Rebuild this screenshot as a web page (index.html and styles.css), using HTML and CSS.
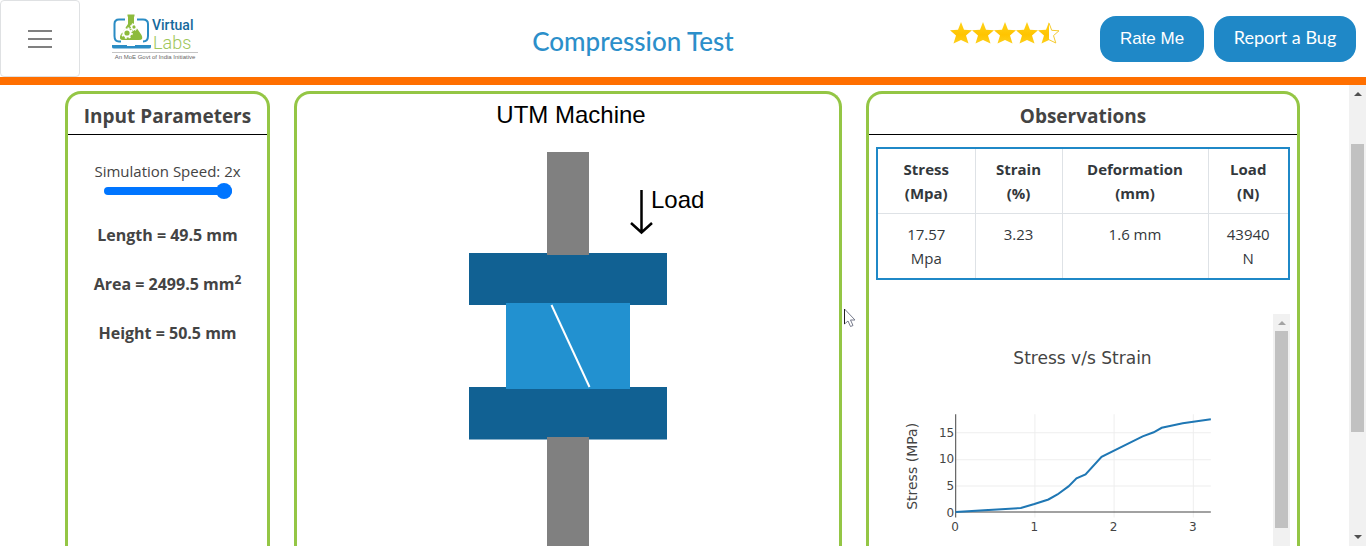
FILE: index.html
```html
<!DOCTYPE html>
<html lang="en">
<head>
<meta charset="utf-8">
<title>Compression Test - Virtual Labs</title>
<link rel="stylesheet" href="styles.css">
</head>
<body>
<header class="header">
  <div class="brand">
    <button class="menu" type="button" aria-label="Menu">
      <span class="menu-bar"></span><span class="menu-bar"></span><span class="menu-bar"></span>
    </button>
    <a href="#" class="logo" aria-label="Virtual Labs">
      <svg width="88" height="50" viewBox="0 0 88 50">
        <path d="M13 5.500H7Q2.500 5.500 2.500 10V22Q2.500 27.500 7 27.500H9M25 5.500H31Q36 5.500 36 10V22Q36 27.500 31 27.500" fill="none" stroke="#2a8cc4" stroke-width="2"/>
        <path d="M0 31H39V33Q39 34.500 37 34.500H2Q0 34.500 0 33Z" fill="#2a8cc4"/>
        <path d="M15 31h8v1h-8z" fill="#fff"/>
        <path d="M15.500 .5H22.500V2.500H22V10L29.500 21Q32 26 27 26H11Q6.500 26 8.500 21L16 10V2.500H15.500Z" fill="#8dbb3d"/>
        <circle cx="15" cy="19" r="3.600" fill="none" stroke="#fff" stroke-width="2"/>
        <circle cx="15" cy="19" r="5" fill="none" stroke="#fff" stroke-width="1.600" stroke-dasharray="2 1.930"/>
        <circle cx="22" cy="13" r="2.400" fill="none" stroke="#fff" stroke-width="1.500"/>
        <circle cx="22" cy="13" r="3.600" fill="none" stroke="#fff" stroke-width="1" stroke-dasharray="1.500 1.330"/>
        <text x="40" y="16" class="logo-virtual">Virtual</text>
        <text x="41" y="35" class="logo-labs">Labs</text>
        <path d="M0 38.500H86" stroke="#c4c4c4"/>
        <text x="43" y="45" text-anchor="middle" class="logo-tag">An MoE Govt of India Initiative</text>
      </svg>
    </a>
  </div>
  <h1 class="title">Compression Test</h1>
  <div class="actions">
    <svg class="stars" width="110" height="23" viewBox="0 0 110 23" role="img" aria-label="4.5 out of 5 stars">
      <defs>
        <path id="star" d="M11 0L14 7.800L22 8.300L16 13.500L18.500 21.500L11 18L3.500 21.500L6 13.500L0 8.300L8 7.800Z"/>
        <linearGradient id="gold" x1="0" y1="0" x2="0" y2="1">
          <stop offset="0" stop-color="#ffd21a"/><stop offset=".6" stop-color="#ffc400"/><stop offset="1" stop-color="#fdd01c"/>
        </linearGradient>
      </defs>
      <g fill="url(#gold)">
        <use href="#star"/><use href="#star" x="22"/><use href="#star" x="44"/><use href="#star" x="66"/>
        <path d="M99 0V18L91.500 21.500L94 13.500L88 8.300L96 7.800Z"/>
      </g>
      <path d="M99 1L101.700 8.300L109 8.800L103.500 13.600L105.800 21L99 17.700" fill="#fff" stroke="#f5cb2e"/>
    </svg>
    <button class="btn btn-rate" type="button">Rate Me</button>
    <button class="btn btn-bug" type="button">Report a Bug</button>
  </div>
</header>

<div class="page">
  <main class="panels">
    <section class="panel">
      <h2 class="panel-title">Input Parameters</h2>
      <div class="inputs">
        <label for="speed">Simulation Speed: 2x</label>
        <input id="speed" class="slider" type="range" min="1" max="2" value="2">
        <p class="param">Length = 49.5 mm</p>
        <p class="param">Area = 2499.5 mm<sup>2</sup></p>
        <p class="param">Height = 50.5 mm</p>
      </div>
    </section>

    <section class="panel">
      <svg class="machine" viewBox="0 0 542 452">
        <text x="274" y="29" text-anchor="middle">UTM Machine</text>
        <text x="354" y="114">Load</text>
        <path d="M344.500 96V138M334 129L344.500 138.500L355 129" fill="none" stroke="#000" stroke-width="2.500"/>
        <path d="M172 159H370V211H172ZM172 293H370V345.500H172Z" fill="#116193"/>
        <path d="M209 209H333V295H209Z" fill="#2291d0"/>
        <path d="M254.500 211L292.500 293" stroke="#fff" stroke-width="2"/>
        <path d="M250 58H292V161H250ZM250 343H292V452H250Z" fill="#808080"/>
      </svg>
    </section>

    <section class="panel">
      <h2 class="panel-title">Observations</h2>
      <div class="observations">
        <table class="results">
          <colgroup><col class="col-stress"><col class="col-strain"><col class="col-deform"><col class="col-load"></colgroup>
          <thead>
            <tr><th>Stress<br>(Mpa)</th><th>Strain<br>(%)</th><th>Deformation<br>(mm)</th><th>Load<br>(N)</th></tr>
          </thead>
          <tbody>
            <tr><td>17.57<br>Mpa</td><td>3.23</td><td>1.6 mm</td><td>43940<br>N</td></tr>
          </tbody>
        </table>
        <div class="plots">
          <svg class="chart" viewBox="0 0 396 232">
            <text x="206" y="50" text-anchor="middle" class="chart-title">Stress v/s Strain</text>
            <text transform="translate(41 152) rotate(-90)" text-anchor="middle" class="axis-title">Stress (MPa)</text>
            <path d="M158.500 100V203M237.500 100V203M316.500 100V203M80 118.500H334M80 145.500H334M80 171.500H334" stroke="#eee"/>
            <path d="M79.500 100V203M79 197.500H334" stroke="#444"/>
            <path d="M79.500 197.500L144.500 193.500L158 189.500L172 185L181 180L192 172L200 164L209 160L225 142.500L266 122L277 118L285 113.500L306 109L334 105" fill="none" stroke="#1f77b4" stroke-width="2"/>
            <g text-anchor="end"><text x="78" y="202">0</text><text x="78" y="176">5</text><text x="78" y="149">10</text><text x="78" y="123">15</text></g>
            <g text-anchor="middle"><text x="79" y="216">0</text><text x="158" y="216">1</text><text x="237" y="216">2</text><text x="316" y="216">3</text></g>
          </svg>
          <div class="scrollbar scrollbar-inner">
            <span class="arrow arrow-up arrow-off"></span>
            <span class="thumb thumb-inner"></span>
          </div>
        </div>
      </div>
    </section>
  </main>
  <div class="scrollbar">
    <span class="arrow arrow-up"></span>
    <span class="track"><span class="thumb thumb-page"></span></span>
    <span class="arrow arrow-down"></span>
  </div>
</div>
<svg class="cursor" width="12" height="20" viewBox="0 0 12 20"><path d="M.5 1V16L4 13L6.500 18.500L9 17.500L6.500 12H11Z" fill="#fff" stroke="#777b8c"/><path d="M.5 1V16" stroke="#222"/></svg>
</body>
</html>
```

FILE: styles.css
```css
* { box-sizing: border-box; }

body {
  display: flex;
  flex-direction: column;
  height: 100vh;
  margin: 0;
  overflow: hidden;
  background: #fff;
  color: #444;
  font: 15px/24px "Open Sans", "Noto Sans", sans-serif;
}

.header {
  display: grid;
  grid-template-columns: 316px 1fr 416px;
  flex: none;
  border-bottom: 8px solid #ff6f00;
}

.brand { display: flex; align-items: center; gap: 32px; }

.menu {
  display: flex;
  flex-direction: column;
  align-items: center;
  justify-content: center;
  gap: 6px;
  width: 80px;
  height: 77px;
  padding: 0;
  border: 1px solid #dfe1e3;
  border-radius: 4px;
  background: #fff;
}
.menu-bar { width: 24px; height: 2px; background: #808080; }

.logo { display: flex; }
.logo .logo-virtual { fill: #14699c; font: 500 14px Roboto, sans-serif; }
.logo .logo-labs { fill: #a0c65a; font: 300 18px Roboto, sans-serif; }
.logo .logo-tag { fill: #666; font: 6px "Liberation Sans", sans-serif; }

.title {
  margin: 0;
  padding-top: 4px;
  align-self: center;
  color: #2c8fca;
  font: 500 26px/32px Lato, sans-serif;
  text-align: center;
}

.actions {
  display: flex;
  align-items: center;
  justify-content: flex-end;
  padding-right: 10px;
  gap: 10px;
}
.stars { margin: 0 auto 10px 0; }

.btn {
  height: 46px;
  padding: 0;
  border: 0;
  border-radius: 16px;
  background: #1f88c7;
  color: #fff;
}
.btn-rate { width: 104px; font: 17px "Liberation Sans", sans-serif; }
.btn-bug { width: 142px; padding-bottom: 4px; font: 18px Lato, sans-serif; }

.page { display: flex; flex: 1; min-height: 0; }

.panels {
  display: grid;
  grid-template-columns: 205fr 548fr 434fr;
  gap: 24px;
  flex: 1;
  padding: 6px 49px 0 65px;
}

.panel {
  min-width: 0;
  border: 3px solid #94c645;
  border-bottom: 0;
  border-radius: 16px 16px 0 0;
}

.panel-title {
  margin: 0;
  padding: 8px 0 4px;
  border-bottom: 1px solid #000;
  font-size: 19px;
  line-height: 28px;
  text-align: center;
}

.inputs {
  display: flex;
  flex-direction: column;
  align-items: center;
  padding-top: 24px;
}

.slider {
  width: 128px;
  height: 16px;
  margin: 0;
  appearance: none;
  background: none;
}
.slider::-webkit-slider-runnable-track { height: 8px; border-radius: 4px; background: #0075ff; }
.slider::-webkit-slider-thumb {
  width: 16px;
  height: 16px;
  margin-top: -4px;
  appearance: none;
  border-radius: 50%;
  background: #0075ff;
}

.param { margin: 25px 0 0; font-size: 16px; font-weight: 700; }
.slider + .param { margin-top: 24px; }
.param sup { font-size: 12px; line-height: 0; }

.machine { display: block; width: 100%; }
.machine text { fill: #000; font: 24px "Liberation Sans", sans-serif; }

.observations { padding: 12px 7px 0; }

.results {
  width: 100%;
  table-layout: fixed;
  border: 2px solid #1f88c7;
  border-collapse: collapse;
  color: #33383c;
  text-align: center;
}
.results th,
.results td {
  padding: 8px 0;
  border: 1px solid #dee2e6;
  vertical-align: top;
}
.results tr > :first-child { border-left: 2px solid #1f88c7; }
.results tr > :last-child { border-right: 2px solid #1f88c7; }
.results th { border-top: 2px solid #1f88c7; }
.results td { border-bottom: 2px solid #1f88c7; }
.col-stress { width: 98px; }
.col-strain { width: 87px; }
.col-load { width: 81px; }

.plots { display: flex; margin-top: 34px; }
.chart { flex: 1; min-width: 0; }
.chart text { fill: #444; font: 12px "DejaVu Sans", Verdana, sans-serif; }
.chart .chart-title { font-size: 17px; }
.chart .axis-title { font-size: 14px; }

.scrollbar {
  display: flex;
  flex-direction: column;
  align-items: center;
  flex: none;
  width: 17px;
  background: #f1f1f1;
}
.arrow {
  flex: none;
  width: 0;
  height: 0;
  margin: 7px 0;
  border: 4px solid transparent;
}
.arrow-up { border-top: 0; border-bottom-color: #505050; }
.arrow-down { border-bottom: 0; border-top-color: #505050; }
.arrow-off { margin-bottom: 6px; border-bottom-color: #a3a3a3; }
.track { display: flex; flex: 1; flex-direction: column; padding-top: 41px; }
.thumb { width: 13px; background: #c1c1c1; }
.thumb-inner { height: 197px; }
.thumb-page { height: 75%; }

.cursor { position: absolute; left: 844px; top: 308px; }
```
